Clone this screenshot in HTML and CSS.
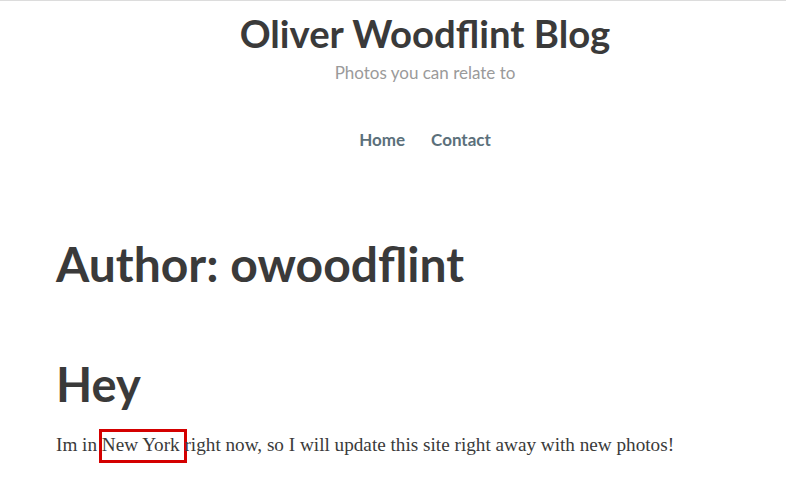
FILE: index.html
```html
<!DOCTYPE html>
<html lang="en">
<head>
<meta charset="utf-8">
<title>Oliver Woodflint Blog</title>
<link rel="stylesheet" href="styles.css">
</head>
<body>
<header class="site-header">
  <h1 class="site-title">Oliver Woodflint Blog</h1>
  <p class="site-tagline">Photos you can relate to</p>
  <nav class="site-nav">
    <a href="#">Home</a>
    <a href="#">Contact</a>
  </nav>
</header>
<main class="content">
  <h1 class="page-title">Author: owoodflint</h1>
  <article class="post">
    <h2 class="post-title">Hey</h2>
    <p class="post-body">Im in <span class="mark">New York </span>right now, so I will update this site right away with new photos!</p>
  </article>
</main>
</body>
</html>
```

FILE: styles.css
```css
html, body {
  margin: 0;
  padding: 0;
  background: #fff;
}
body {
  border-top: 1px solid #dcdcdc;
  color: #3a3a3a;
  font-family: "Liberation Serif", serif;
}
.site-header {
  display: flex;
  flex-direction: column;
  align-items: center;
  padding-left: 64px;
  padding-top: 8px;
}
.site-title {
  margin: 0;
  font-family: Lato, sans-serif;
  font-weight: 700;
  font-size: 38.3px;
  line-height: 48px;
  color: #3a3a3a;
}
.site-tagline {
  margin: 6px 0 0;
  font-family: Lato, sans-serif;
  font-size: 17px;
  line-height: 20px;
  color: #9a9a9a;
}
.site-nav {
  display: flex;
  gap: 26px;
  margin-top: 46px;
}
.site-nav a {
  font-family: Lato, sans-serif;
  font-weight: 700;
  font-size: 17px;
  color: #5b707b;
  text-decoration: none;
}
.content {
  padding: 0 56px;
}
.page-title {
  margin: 86px 0 0;
  font-family: Lato, sans-serif;
  font-weight: 700;
  font-size: 48px;
  line-height: 56px;
  color: #3a3a3a;
}
.post-title {
  margin: 64px 0 0;
  font-family: Lato, sans-serif;
  font-weight: 700;
  font-size: 47px;
  line-height: 56px;
  color: #3a3a3a;
}
.post-body {
  margin: 18px 0 0;
  padding-bottom: 20px;
  font-size: 19.2px;
  line-height: 30px;
  color: #3a3a3a;
}
.mark {
  border: 3px solid #d40000;
  padding: 2px 0 5px;
  margin: 0 -3px;
}
```
